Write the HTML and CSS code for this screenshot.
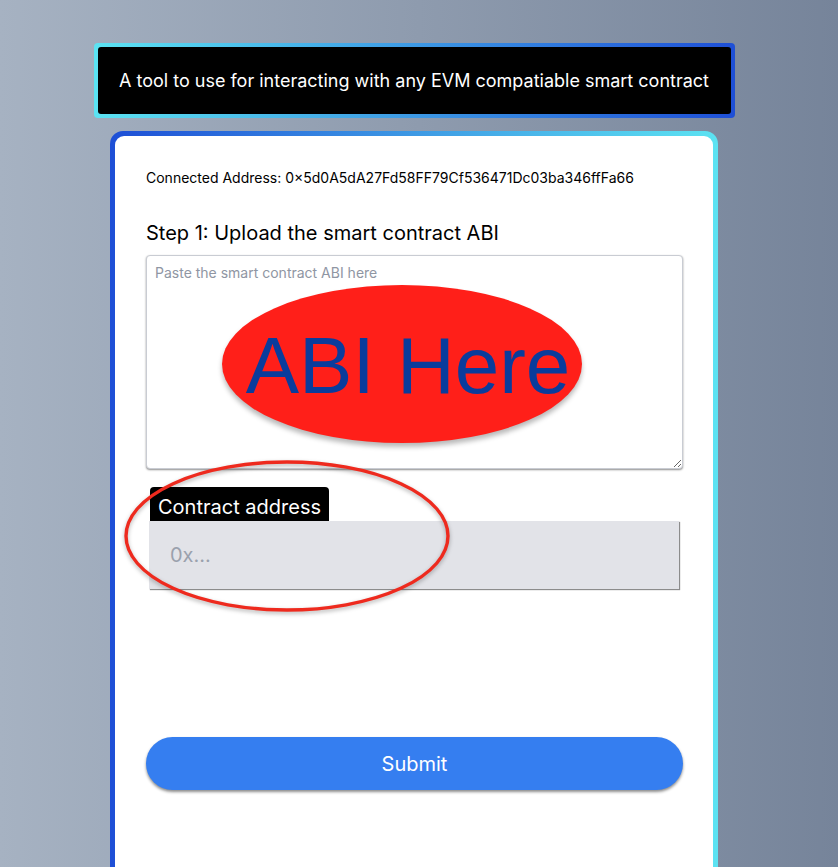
FILE: index.html
```html
<!DOCTYPE html>
<html>
<head>
<meta charset="utf-8">
<link rel="stylesheet" href="styles.css">
</head>
<body>
<div class="page">
  <div class="banner">
    <div class="banner-inner">A tool to use for interacting with any EVM compatiable smart contract</div>
  </div>
  <div class="card">
    <div class="card-inner">
      <p class="address">Connected Address: 0×5d0A5dA27Fd58FF79Cf536471Dc03ba346ffFa66</p>
      <h2 class="step">Step 1: Upload the smart contract ABI</h2>
      <div class="abi-wrap">
        <textarea class="abi" placeholder="Paste the smart contract ABI here"></textarea>
        <div class="abi-badge"><span>ABI Here</span></div>
      </div>
      <div class="field">
        <label class="field-label">Contract address</label>
        <input class="field-input" type="text" placeholder="0x...">
        <svg class="ring" width="330" height="158" viewBox="0 0 330 158">
          <ellipse cx="165" cy="78" rx="161" ry="74" fill="none" stroke="#ee2a1e" stroke-width="3.4"/>
        </svg>
      </div>
      <button class="submit">Submit</button>
    </div>
  </div>
</div>
</body>
</html>
```

FILE: styles.css
```css
* { box-sizing: border-box; }
html, body { margin: 0; padding: 0; }
body {
  width: 838px;
  height: 867px;
  overflow: hidden;
  background: linear-gradient(to right, #a6b2c2, #76849a);
  font-family: Inter, "Noto Sans", sans-serif;
}
.page {
  width: 828px;
  display: flex;
  flex-direction: column;
  align-items: center;
  padding-top: 43px;
}
.banner {
  width: 641px;
  height: 75px;
  padding: 4px;
  border-radius: 4px;
  background: linear-gradient(to right, #5ce3f2, #1e4fd6);
}
.banner-inner {
  height: 100%;
  background: #000;
  border-radius: 3px;
  color: #fff;
  font-size: 18px;
  display: flex;
  align-items: center;
  justify-content: center;
}
.card {
  margin-top: 13px;
  width: 608px;
  height: 760px;
  padding: 5px;
  border-radius: 13px;
  background: linear-gradient(to right, #1e4fd6, #5ce3f2);
}
.card-inner {
  height: 100%;
  background: #fff;
  border-radius: 9px;
  padding: 33px 30px 0 31px;
}
.address {
  margin: 0;
  font-size: 14px;
  line-height: 17px;
  color: #000;
}
.step {
  margin: 35px 0 0;
  font-size: 20px;
  font-weight: 400;
  line-height: 24px;
  color: #000;
}
.abi-wrap {
  position: relative;
  margin-top: 10px;
  width: 537px;
  height: 214px;
}
.abi {
  display: block;
  width: 537px;
  height: 214px;
  border: 1px solid #c9ccd3;
  border-radius: 4px;
  box-shadow: 0 1px 2px rgba(0,0,0,0.45);
  padding: 8px 8px;
  font-family: Inter, "Noto Sans", sans-serif;
  font-size: 14px;
  line-height: 17px;
  resize: vertical;
  background: #fff;
}
.abi::placeholder { color: #8f96a3; }
.abi-badge {
  position: absolute;
  left: 76px;
  top: 30px;
  width: 360px;
  height: 158px;
  border-radius: 50%;
  background: #ff1f19;
  box-shadow: 0 4px 5px rgba(0,0,0,0.28);
  display: flex;
  align-items: center;
  justify-content: center;
  pointer-events: none;
}
.abi-badge span {
  font-family: "Liberation Sans", Arial, sans-serif;
  font-size: 80px;
  line-height: 1;
  color: #0a3c9c;
  margin-left: 12px;
  margin-top: 4px;
}
.field {
  position: relative;
  margin-top: 18px;
  margin-left: 3px;
  width: 530px;
}
.field-label {
  display: inline-block;
  background: #000;
  color: #fff;
  font-size: 20px;
  line-height: 24px;
  height: 34px;
  padding: 8px 8px 0;
  margin-left: 1px;
  border-radius: 4px 4px 0 0;
}
.field-input {
  display: block;
  width: 530px;
  height: 68px;
  border: none;
  background: #e2e3e8;
  box-shadow: 1px 1px 1px rgba(0,0,0,0.45);
  padding: 0 21px;
  font-family: Inter, "Noto Sans", sans-serif;
  font-size: 20px;
  outline: none;
}
.field-input::placeholder { color: #9aa1ad; }
.ring {
  position: absolute;
  left: -27px;
  top: -29px;
  filter: drop-shadow(0 2px 2px rgba(0,0,0,0.3));
  pointer-events: none;
}
.submit {
  display: block;
  margin-top: 148px;
  width: 537px;
  height: 53px;
  border: none;
  border-radius: 27px;
  background: #357ef0;
  color: #fff;
  font-family: Inter, "Noto Sans", sans-serif;
  font-size: 20px;
  box-shadow: 0 2px 3px rgba(0,0,0,0.45);
}
```
